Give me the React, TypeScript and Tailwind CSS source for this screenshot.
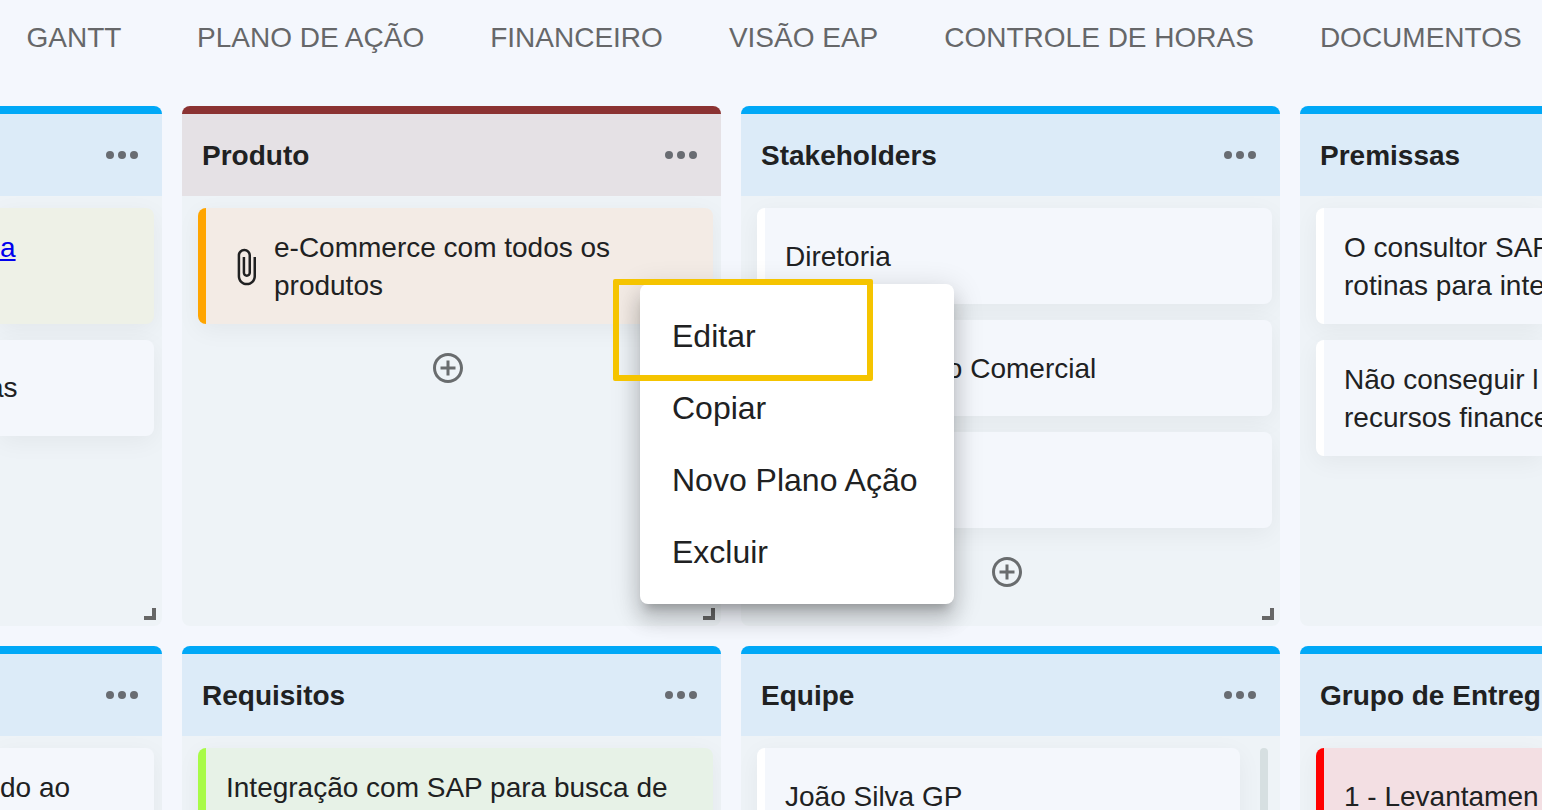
import type { ReactNode } from 'react';

const tabs = ['GANTT', 'PLANO DE AÇÃO', 'FINANCEIRO', 'VISÃO EAP', 'CONTROLE DE HORAS', 'DOCUMENTOS'];

const menuItems = ['Editar', 'Copiar', 'Novo Plano Ação', 'Excluir'];

const MoreIcon = () => (
  <svg viewBox="0 0 24 24" className="size-12" fill="currentColor">
    <circle cx="6" cy="12" r="2" />
    <circle cx="12" cy="12" r="2" />
    <circle cx="18" cy="12" r="2" />
  </svg>
);

const AddIcon = () => (
  <svg viewBox="0 0 24 24" className="size-9" fill="currentColor">
    <path d="M13 7h-2v4H7v2h4v4h2v-4h4v-2h-4V7zm-1-5C6.48 2 2 6.48 2 12s4.48 10 10 10 10-4.48 10-10S17.52 2 12 2zm0 18c-4.41 0-8-3.59-8-8s3.59-8 8-8 8 3.59 8 8-3.59 8-8 8z" />
  </svg>
);

const ClipIcon = () => (
  <svg viewBox="0 0 24 24" className="size-10 shrink-0" fill="currentColor">
    <path d="M16.5 6v11.5c0 2.21-1.79 4-4 4s-4-1.79-4-4V5c0-1.38 1.12-2.5 2.5-2.5s2.5 1.12 2.5 2.5v10.5c0 .55-.45 1-1 1s-1-.45-1-1V6H10v9.5c0 1.38 1.12 2.5 2.5 2.5s2.5-1.12 2.5-2.5V5c0-2.21-1.79-4-4-4S7 2.79 7 5v12.5c0 3.04 2.46 5.5 5.5 5.5s5.5-2.46 5.5-5.5V6h-1.5z" />
  </svg>
);

type ColumnProps = {
  title?: string;
  head?: string;
  round?: string;
  body?: string;
  more?: boolean;
  resize?: boolean;
  overlay?: ReactNode;
  children?: ReactNode;
};

const Column = ({
  title,
  head = 'border-[#00a8f7] bg-[#dcebf8]',
  round = 'rounded-t-lg',
  body = 'rounded-b-lg pr-2',
  more = true,
  resize = false,
  overlay,
  children,
}: ColumnProps) => (
  <section className="relative flex min-w-0 flex-col">
    <header className={`flex h-[90px] shrink-0 items-center justify-between border-t-8 pl-5 pr-4 ${round} ${head}`}>
      <h2 className="mt-0.5 whitespace-nowrap text-[28px] font-bold leading-[38px]">{title}</h2>
      {more && (
        <button type="button" aria-label="Mais opções" className="text-[#696c72]">
          <MoreIcon />
        </button>
      )}
    </header>
    <div className={`flex grow flex-col gap-4 overflow-hidden bg-[#eef3f7] pl-4 pt-3 ${body}`}>{children}</div>
    {resize && <span className="absolute bottom-1.5 right-1.5 size-3 border-b-4 border-r-4 border-[#666666]" />}
    {overlay}
  </section>
);

type CardProps = { color?: string; round?: string; children?: ReactNode };

const Card = ({ color = 'border-white bg-[#f4f7fc]', round = 'rounded-lg', children }: CardProps) => (
  <article
    className={`flex min-h-24 items-center border-l-8 px-5 pb-[19px] pt-[21px] text-[28px] leading-[38px] shadow-[0_6px_24px_rgba(0,0,0,0.05)] ${round} ${color}`}
  >
    {children}
  </article>
);

/* Card of the first column, which is scrolled partly out of view */
const EdgeCard = ({ color = 'bg-[#f4f7fc]', children }: CardProps) => (
  <article className={`min-h-24 rounded-r-lg text-[28px] leading-[38px] shadow-[0_6px_24px_rgba(0,0,0,0.05)] ${color}`}>
    {children}
  </article>
);

const EdgeHeader = () => (
  <header className="flex h-[90px] shrink-0 items-center justify-end rounded-tr-lg border-t-8 border-[#00a8f7] bg-[#dcebf8] pr-4">
    <button type="button" aria-label="Mais opções" className="text-[#696c72]">
      <MoreIcon />
    </button>
  </header>
);

const AddButton = () => (
  <button type="button" aria-label="Adicionar" className="mr-4 mt-2.5 self-center text-[#696c6e]">
    <AddIcon />
  </button>
);

const ContextMenu = () => (
  <div className="absolute left-[458px] top-[178px] z-10 w-[314px] rounded-lg bg-white py-4 shadow-[0_10px_10px_-6px_rgba(0,0,0,0.2),0_16px_20px_2px_rgba(0,0,0,0.14),0_6px_28px_4px_rgba(0,0,0,0.12)]">
    <div role="menu" className="flex flex-col">
      {menuItems.map((item) => (
        <button key={item} type="button" role="menuitem" className="h-18 whitespace-nowrap px-8 text-left text-[32px] leading-10">
          {item}
        </button>
      ))}
    </div>
    {/* Highlight around the first option */}
    <div className="pointer-events-none absolute -left-[27px] -top-[5px] h-[102px] w-[260px] rounded-xs border-6 border-[#f5c400]" />
  </div>
);

const App = () => {
  return (
    <div className="h-screen overflow-hidden bg-[#f4f7fd] font-['Liberation_Sans',Arial,sans-serif] text-[#202122]">
      <nav className="-ml-4 flex h-[74px] items-center pt-0.5">
        {tabs.map((tab) => (
          <button key={tab} type="button" className="min-w-[180px] shrink-0 whitespace-nowrap px-[33px] text-[28px] leading-9 text-[#666769]">
            {tab}
          </button>
        ))}
      </nav>

      <main className="mt-8 grid grid-cols-[162fr_539fr_539fr_242fr] grid-rows-[520px_520px] gap-5">
        <section className="relative flex min-w-0 flex-col">
          <EdgeHeader />
          <div className="flex grow flex-col gap-4 overflow-hidden rounded-br-lg bg-[#eef3f7] pr-2 pt-3">
            <EdgeCard color="bg-[#eef1e7]">
              <div className="h-[116px] pt-[21px]">
                <a href="#" className="text-[#0000ee] underline">
                  a
                </a>
              </div>
            </EdgeCard>
            <EdgeCard>
              <div className="-ml-3 py-[29px]">as</div>
            </EdgeCard>
          </div>
          <span className="absolute bottom-1.5 right-1.5 size-3 border-b-4 border-r-4 border-[#666666]" />
        </section>

        <Column title="Produto" head="border-[#8b3232] bg-[#e5e1e5]" resize overlay={<ContextMenu />}>
          <Card color="border-[#ffa500] bg-[#f3ebe5]">
            <ClipIcon />
            <p className="ml-2">
              e-Commerce com todos os
              <br />
              produtos
            </p>
          </Card>
          <AddButton />
        </Column>

        <Column title="Stakeholders" resize>
          <Card>Diretoria</Card>
          <Card>Departamento Comercial</Card>
          <Card />
          <AddButton />
        </Column>

        <Column title="Premissas" more={false} round="rounded-tl-lg" body="rounded-bl-lg">
          <Card round="rounded-l-lg">
            <p className="whitespace-nowrap">
              O consultor SAP
              <br />
              rotinas para inte
            </p>
          </Card>
          <Card round="rounded-l-lg">
            <p className="whitespace-nowrap">
              Não conseguir l
              <br />
              recursos finance
            </p>
          </Card>
        </Column>

        <section className="flex min-w-0 flex-col">
          <EdgeHeader />
          <div className="flex grow flex-col gap-4 overflow-hidden bg-[#eef3f7] pr-2 pt-3">
            <EdgeCard>
              <div className="pt-[21px]">do ao</div>
            </EdgeCard>
          </div>
        </section>

        <Column title="Requisitos">
          <Card color="border-[#a8fb47] bg-[#e7f2e7]">
            <p>
              Integração com SAP para busca de
              <br />
              produtos
            </p>
          </Card>
        </Column>

        <Column title="Equipe" body="pr-3">
          <div className="flex gap-5">
            <div className="grow">
              <Card>João Silva GP</Card>
            </div>
            <div className="h-60 w-2 rounded-full bg-[#d6dfe1]" />
          </div>
        </Column>

        <Column title="Grupo de Entreg" more={false} round="rounded-tl-lg" body="">
          <Card color="border-[#ff0000] bg-[#f3dfe3]" round="rounded-l-lg">
            <p className="whitespace-nowrap">1 - Levantamen</p>
          </Card>
        </Column>
      </main>
    </div>
  );
};

export default App;
